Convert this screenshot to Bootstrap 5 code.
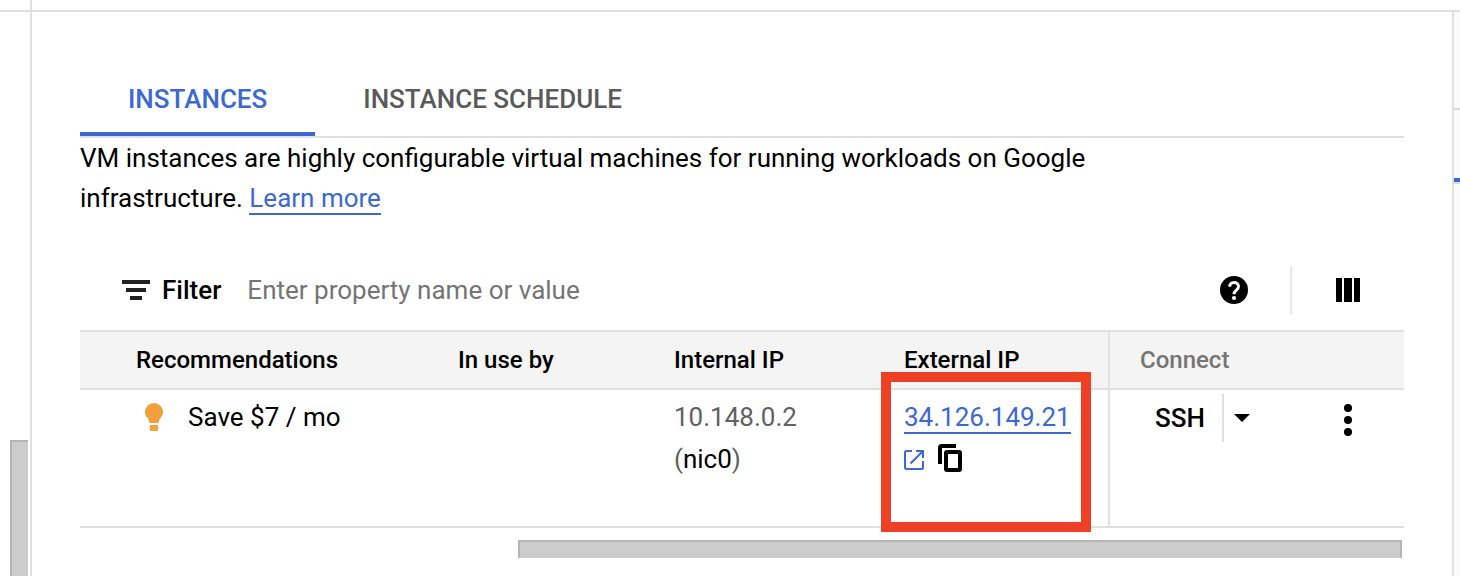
<!DOCTYPE html>
<html lang="en">
<head>
<meta charset="utf-8">
<meta name="viewport" content="width=device-width, initial-scale=1">
<title>VM instances</title>
<link rel="stylesheet" href="https://cdn.jsdelivr.net/npm/bootstrap@5.3.0/dist/css/bootstrap.min.css">
<style>
  :root { --line: #e0e0e0; --blue: #3c68d3; --bar: #ccc; --bar-edge: #b5b5b5; }
  body { font-family: Roboto, "Liberation Sans", sans-serif; font-size: 26px; line-height: 40px; color: #000; background: #fff; }
  svg { display: block; flex: none; }
  .page-top { height: 12px; border-bottom: 2px solid var(--line); }
  .page-top-rail { width: 32px; border-right: 2px solid var(--line); }
  .rail { width: 32px; padding: 428px 2px 0 10px; border-right: 2px solid var(--line); }
  .rail-thumb { background: var(--bar); border: solid var(--bar-edge); border-width: 2px 0 0 2px; }
  .content { min-width: 0; padding: 48px 48px 0; }
  .side { width: 8px; background: #fafafa; border-left: 2px solid var(--line); }
  .side-head { height: 98px; border-bottom: 2px solid #dcdcdc; }
  .side-tab { height: 74px; padding-top: 68px; border-bottom: 2px solid #dcdcdc; }
  .side-tab-mark { height: 4px; background: var(--blue); }
  .view-tabs { border-bottom: 2px solid var(--line); }
  .view-tabs a { padding: 19px 48px 13px; border-bottom: 4px solid transparent; color: #5a5a5a; font-weight: 500; text-decoration: none; }
  .view-tabs a.active { color: var(--blue); border-color: var(--blue); }
  .intro { max-width: 1040px; }
  .ul-link { color: var(--blue); text-decoration: none; border-bottom: 2px solid var(--blue); }
  .filter-bar { height: 80px; margin-top: 32px; padding: 0 44px 0 42px; }
  .filter-bar label { font-weight: 500; margin: 0 26px 0 12px; }
  .filter-bar input { border: 0; outline: 0; padding: 0; min-width: 0; color: #000; background: none; }
  .filter-bar input::placeholder { color: #757575; opacity: 1; }
  .icon-btn { border: 0; padding: 0; background: none; color: #000; }
  .bar-rule { width: 2px; height: 48px; background: #e8e8e8; margin: 0 44px 0 42px; }
  .vm-table { table-layout: fixed; width: 100%; border-collapse: separate; border-spacing: 0; }
  .vm-table th { height: 60px; padding: 0 24px; background: #f4f4f4; border: solid var(--line); border-width: 2px 0; font-size: 24px; font-weight: 500; }
  .vm-table td { height: 138px; padding: 6px 24px 0; vertical-align: top; border-bottom: 2px solid var(--line); line-height: 42px; }
  .vm-table .first { padding-left: 56px; }
  .vm-table .actions { border-left: 2px solid var(--line); padding-left: 30px; }
  .vm-table th.actions { color: #757575; }
  .vm-table td.actions { padding: 4px 50px 0 45px; }
  .w-use { width: 216px; } .w-int { width: 230px; } .w-ext { width: 228px; } .w-act { width: 296px; }
  .dim { color: #616161; }
  .ip-tools { gap: 14px; padding-top: 6px; }
  .callout-box { top: -18px; left: 1px; width: 210px; height: 160px; border: 10px solid #ed4025; pointer-events: none; }
  .ssh { font-size: 26px; font-weight: 500; padding-right: 17px; }
  .split { height: 48px; padding-left: 10px; border-left: 2px solid var(--line); }
  .h-thumb { height: 18px; margin: 12px 2px 0 438px; background: var(--bar); border: solid var(--bar-edge); border-width: 2px 2px 0; }
</style>
</head>
<body>
<div class="d-flex flex-column min-vh-100">
  <header class="page-top"><div class="page-top-rail h-100"></div></header>
  <div class="d-flex flex-grow-1">
    <div class="rail d-flex flex-shrink-0"><div class="rail-thumb flex-grow-1"></div></div>
    <main class="content flex-grow-1">
      <nav class="view-tabs d-flex" aria-label="Views">
        <a href="#instances" class="active" aria-current="page">INSTANCES</a>
        <a href="#schedule">INSTANCE SCHEDULE</a>
      </nav>
      <p class="intro mb-0">VM instances are highly configurable virtual machines for running workloads on Google infrastructure. <a href="#learn" class="ul-link">Learn more</a></p>

      <div class="filter-bar d-flex align-items-center">
        <svg width="28" height="20" viewBox="0 0 28 20" fill="#212121" aria-hidden="true"><path d="M0 0h28v4H0zM4 8h20v4H4zM8 16h12v4H8z"/></svg>
        <label for="filter">Filter</label>
        <input id="filter" class="flex-grow-1" type="text" placeholder="Enter property name or value">
        <button class="icon-btn" type="button" aria-label="Help">
          <svg width="28" height="28" viewBox="0 0 28 28"><circle cx="14" cy="14" r="14" fill="currentColor"/><path d="M9.700 10.800C9.700 8 11.500 6.500 14 6.500s4.500 1.600 4.500 4c0 3.600-4.500 3.600-4.500 7.700" fill="none" stroke="#fff" stroke-width="3"/><circle cx="14" cy="22" r="2.100" fill="#fff"/></svg>
        </button>
        <div class="bar-rule"></div>
        <button class="icon-btn" type="button" aria-label="Columns">
          <svg width="24" height="24" viewBox="0 0 24 24" fill="currentColor"><path d="M0 0h6v24H0zM8 0h8v24H8zM18 0h6v24h-6z"/></svg>
        </button>
      </div>

      <table class="vm-table">
        <colgroup><col><col class="w-use"><col class="w-int"><col class="w-ext"><col class="w-act"></colgroup>
        <thead>
          <tr><th class="first" scope="col">Recommendations</th><th scope="col">In use by</th><th scope="col">Internal IP</th><th scope="col">External IP</th><th class="actions" scope="col">Connect</th></tr>
        </thead>
        <tbody>
          <tr>
            <td class="first">
              <div class="d-flex align-items-center ps-2">
                <svg width="20" height="28" viewBox="0 0 20 28" fill="#f2a03b" aria-hidden="true"><path d="M10 0a9 9 0 0 1 9 9.300c0 2.600-1.200 4.700-3.200 6.200L14.500 20h-9l-1.300-4.500C2.200 14 1 11.900 1 9.300A9 9 0 0 1 10 0zM5.800 22h8.400v4.500q0 1.500-1.500 1.500H7.300q-1.500 0-1.500-1.500z"/></svg>
                <span class="ms-4">Save $7 / mo</span>
              </div>
            </td>
            <td></td>
            <td><span class="dim">10.148.0.2</span><br><span class="dim">(</span>nic0<span class="dim">)</span></td>
            <td class="position-relative">
              <a href="#ip" class="ul-link">34.126.149.21</a>
              <div class="ip-tools d-flex">
                <a href="#open" aria-label="Open in new tab"><svg width="20" height="28" viewBox="0 0 20 28" fill="none" stroke="#3c68d3" stroke-width="2"><path d="M8 7H2.500Q1 7 1 8.500v15Q1 25 2.500 25h15q1.500 0 1.500-1.500V17M12 7h7v7M18.500 7.500L6.500 19.500"/></svg></a>
                <button class="icon-btn" type="button" aria-label="Copy address"><svg width="24" height="28" viewBox="0 0 24 28" fill="none" stroke="currentColor" stroke-width="4"><path d="M18 2H3.500Q2 2 2 3.500V20"/><rect x="8" y="8" width="14" height="18" rx="1"/></svg></button>
              </div>
              <div class="callout-box position-absolute"></div>
            </td>
            <td class="actions">
              <div class="d-flex align-items-center">
                <button class="icon-btn ssh" type="button">SSH</button>
                <button class="icon-btn split" type="button" aria-label="SSH options"><svg width="16" height="8" viewBox="0 0 16 8" fill="currentColor"><path d="M0 0h16L8 8z"/></svg></button>
                <button class="icon-btn ms-auto" type="button" aria-label="More actions"><svg width="12" height="36" viewBox="0 -4 12 36" fill="currentColor"><circle cx="6" cy="4" r="4"/><circle cx="6" cy="16" r="4"/><circle cx="6" cy="28" r="4"/></svg></button>
              </div>
            </td>
          </tr>
        </tbody>
      </table>
      <div class="h-thumb"></div>
    </main>
    <aside class="side flex-shrink-0"><div class="side-head"></div><div class="side-tab"><div class="side-tab-mark"></div></div></aside>
  </div>
</div>
<script src="https://cdn.jsdelivr.net/npm/bootstrap@5.3.0/dist/js/bootstrap.bundle.min.js"></script>
</body>
</html>
